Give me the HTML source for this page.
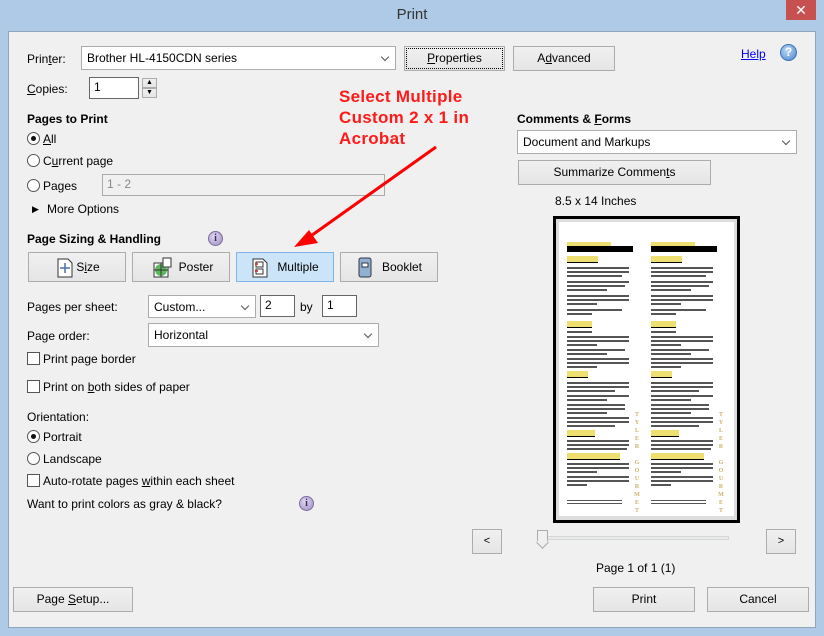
<!DOCTYPE html>
<html><head><meta charset="utf-8"><style>
*{margin:0;padding:0;box-sizing:border-box}
body{width:824px;height:636px;background:#afcae6;font-family:"Liberation Sans",sans-serif;font-size:12px;color:#000;position:relative;overflow:hidden}
.a{position:absolute;white-space:nowrap}
.client{position:absolute;left:8px;top:31px;width:808px;height:597px;background:#f0f0f0;border:1px solid #8fa6bd}
.btn{position:absolute;background:linear-gradient(#f0f0f0,#e5e5e5);border:1px solid #acacac;text-align:center;font-size:12px}
.inp{position:absolute;background:#fff;border:1px solid #abadb3;padding:2px 4px;font-size:12px}
.sel{position:absolute;background:#fff;border:1px solid #acacac;padding:4px 5px;font-size:12px}
.sel:after{content:"";position:absolute;right:7px;top:7px;width:5px;height:5px;border-right:1.5px solid #555;border-bottom:1.5px solid #555;transform:rotate(45deg)}
.lbl{position:absolute;font-size:12px;white-space:nowrap}
.b{font-weight:bold}
.rad{position:absolute;width:13px;height:13px;border:1px solid #555;border-radius:50%;background:#fff}
.rad.on:after{content:"";position:absolute;left:3px;top:3px;width:5px;height:5px;border-radius:50%;background:#111}
.chk{position:absolute;width:13px;height:13px;border:1px solid #555;background:#fff}
.info{position:absolute;width:15px;height:15px;border-radius:50%;background:radial-gradient(circle at 40% 35%,#e0d8f0,#9c8cc0);border:1px solid #7a6aa0;color:#3a2d60;font:bold 10px "Liberation Serif",serif;text-align:center;line-height:13px}
u{text-decoration:underline}
.red{position:absolute;color:#ff1a1a;font-size:17px;font-weight:bold;line-height:21px;white-space:nowrap;letter-spacing:0.3px}
.col{position:absolute;width:68px}
.col div{position:absolute;left:0}
.y{background:#eee070;height:7px}
.g{height:2px;background:#555}
.vt{position:absolute;color:#c9b36a;font:bold 6px "Liberation Serif",serif;line-height:8px;width:6px;text-align:center}
</style></head><body>
<div class="a" style="left:0;top:6px;width:824px;text-align:center;font-size:15px;color:#333">Print</div>
<div class="a" style="left:786px;top:0;width:30px;height:20px;background:#c75050;color:#fff;text-align:center;font-size:14px;line-height:20px">✕</div>
<div class="client"></div>

<div class="lbl" style="left:27px;top:52px">Prin<u>t</u>er:</div>
<div class="sel" style="left:81px;top:46px;width:315px;height:24px">Brother HL-4150CDN series</div>
<div class="btn" style="left:404px;top:46px;width:101px;height:25px;line-height:22px;outline:1px dotted #000;outline-offset:-3px"><u>P</u>roperties</div>
<div class="btn" style="left:513px;top:46px;width:102px;height:25px;line-height:22px">A<u>d</u>vanced</div>
<div class="lbl" style="left:741px;top:47px;color:#0000ee;text-decoration:underline">Help</div>
<div class="a" style="left:780px;top:44px;width:17px;height:17px;border-radius:50%;background:radial-gradient(circle at 40% 35%,#bcd8f5,#4a86cc);border:1px solid #3d73b5;color:#fff;font-weight:bold;font-size:12px;text-align:center;line-height:15px">?</div>

<div class="lbl" style="left:27px;top:82px"><u>C</u>opies:</div>
<div class="inp" style="left:89px;top:77px;width:50px;height:22px;border-color:#666">1</div>
<div class="btn" style="left:142px;top:78px;width:15px;height:10px;font-size:7px;line-height:8px">▲</div>
<div class="btn" style="left:142px;top:88px;width:15px;height:10px;font-size:7px;line-height:8px">▼</div>

<div class="lbl b" style="left:27px;top:112px">Pages to Print</div>
<div class="rad on" style="left:27px;top:132px"></div><div class="lbl" style="left:43px;top:132px"><u>A</u>ll</div>
<div class="rad" style="left:27px;top:154px"></div><div class="lbl" style="left:43px;top:154px">C<u>u</u>rrent page</div>
<div class="rad" style="left:27px;top:179px"></div><div class="lbl" style="left:43px;top:179px">Pages</div>
<div class="inp" style="left:102px;top:174px;width:283px;height:22px;background:#f0f0f0;border-color:#aaa;color:#888">1 - 2</div>
<div class="a" style="left:32px;top:204px;font-size:9px">▶</div><div class="lbl" style="left:47px;top:202px">More Options</div>

<div class="lbl b" style="left:27px;top:232px">Page Sizing &amp; Handling</div>
<div class="info" style="left:208px;top:231px">i</div>

<div class="btn" style="left:28px;top:252px;width:98px;height:30px;line-height:28px;padding-left:22px">S<u>i</u>ze
 <svg class="a" style="left:28px;top:5px" width="16" height="20"><path d="M1 1h10l4 4v14H1z" fill="#fff" stroke="#333"/><path d="M8 5v10M3 10h10" stroke="#4a6fb0" stroke-width="1.5"/></svg></div>
<div class="btn" style="left:132px;top:252px;width:98px;height:30px;line-height:28px;padding-left:30px">Poster
 <svg class="a" style="left:20px;top:4px" width="20" height="21"><rect x="1" y="6" width="14" height="14" fill="#fff" stroke="#333"/><circle cx="8" cy="13" r="6" fill="#5cb85c"/><path d="M8 6v14M1 13h14" stroke="#333"/><rect x="10" y="1" width="8" height="9" fill="#fff" stroke="#333"/></svg></div>
<div class="btn" style="left:236px;top:252px;width:98px;height:30px;line-height:28px;padding-left:26px;background:#cce4f7;border-color:#7eb4ea">Multiple
 <svg class="a" style="left:15px;top:5px" width="16" height="20"><path d="M1 1h10l4 4v14H1z" fill="#fff" stroke="#333"/><rect x="4" y="4" width="7" height="5" fill="none" stroke="#333"/><rect x="4" y="11" width="7" height="5" fill="none" stroke="#333"/><path d="M3 6h3M3 13h3" stroke="#c22" stroke-width="1.5"/></svg></div>
<div class="btn" style="left:340px;top:252px;width:98px;height:30px;line-height:28px;padding-left:26px">Booklet
 <svg class="a" style="left:17px;top:4px" width="14" height="21"><rect x="1" y="1" width="12" height="19" rx="2" fill="#8fb0d0" stroke="#334"/><rect x="4" y="6" width="6" height="4" fill="#fff" stroke="#334"/></svg></div>

<div class="red" style="left:339px;top:86px">Select Multiple<br>Custom 2 x 1 in<br>Acrobat</div>
<svg class="a" style="left:0;top:0" width="824" height="636"><path d="M436 147L308 238" stroke="#f00" stroke-width="3"/><path d="M294 247l24-4-9-13z" fill="#f00"/></svg>

<div class="lbl" style="left:27px;top:300px">Pages per sheet:</div>
<div class="sel" style="left:148px;top:295px;width:108px;height:23px">Custom...</div>
<div class="inp" style="left:260px;top:295px;width:35px;height:22px;border-color:#666">2</div>
<div class="lbl" style="left:300px;top:300px">by</div>
<div class="inp" style="left:322px;top:295px;width:35px;height:22px;border-color:#666">1</div>
<div class="lbl" style="left:27px;top:329px">Page order:</div>
<div class="sel" style="left:148px;top:323px;width:231px;height:24px">Horizontal</div>
<div class="chk" style="left:27px;top:352px"></div><div class="lbl" style="left:43px;top:352px">Print page border</div>
<div class="chk" style="left:27px;top:380px"></div><div class="lbl" style="left:43px;top:380px">Print on <u>b</u>oth sides of paper</div>
<div class="lbl" style="left:27px;top:410px">Orientation:</div>
<div class="rad on" style="left:27px;top:430px"></div><div class="lbl" style="left:43px;top:430px">Portrait</div>
<div class="rad" style="left:27px;top:452px"></div><div class="lbl" style="left:43px;top:452px">Landscape</div>
<div class="chk" style="left:27px;top:474px"></div><div class="lbl" style="left:43px;top:474px">Auto-rotate pages <u>w</u>ithin each sheet</div>
<div class="lbl" style="left:27px;top:497px">Want to print colors as gray &amp; black?</div>
<div class="info" style="left:299px;top:496px">i</div>

<div class="btn" style="left:13px;top:587px;width:120px;height:25px;line-height:23px">Page <u>S</u>etup...</div>

<div class="lbl b" style="left:517px;top:112px">Comments &amp; <u>F</u>orms</div>
<div class="sel" style="left:517px;top:130px;width:280px;height:24px">Document and Markups</div>
<div class="btn" style="left:518px;top:160px;width:193px;height:25px;line-height:23px">Summarize Commen<u>t</u>s</div>
<div class="lbl" style="left:555px;top:194px">8.5 x 14 Inches</div>

<div class="a" style="left:553px;top:216px;width:187px;height:307px;border:3px solid #000;background:#ddd"></div>
<div class="a" style="left:559px;top:222px;width:175px;height:294px;background:#fff"></div>

<div class="col" style="left:567px;top:240px">
 <div class="y" style="top:2px;width:44px;height:4px"></div>
 <div style="top:6px;width:66px;height:6px;background:#000"></div>
 <div class="y" style="top:16px;width:31px;border-bottom:1px solid #000"></div>
 <div class="g" style="top:27px;width:62px"></div><div class="g" style="top:31px;width:62px"></div><div class="g" style="top:35px;width:55px"></div>
 <div class="g" style="top:41px;width:62px"></div><div class="g" style="top:45px;width:58px"></div><div class="g" style="top:49px;width:40px"></div>
 <div class="g" style="top:55px;width:62px"></div><div class="g" style="top:59px;width:62px"></div><div class="g" style="top:63px;width:30px"></div>
 <div class="g" style="top:69px;width:55px"></div><div class="g" style="top:73px;width:25px"></div>
 <div class="y" style="top:81px;width:25px;border-bottom:1px solid #000"></div>
 <div class="g" style="top:91px;width:25px"></div><div class="g" style="top:96px;width:62px"></div><div class="g" style="top:100px;width:62px"></div><div class="g" style="top:104px;width:30px"></div>
 <div class="g" style="top:109px;width:58px"></div><div class="g" style="top:113px;width:40px"></div><div class="g" style="top:118px;width:62px"></div><div class="g" style="top:122px;width:62px"></div><div class="g" style="top:126px;width:30px"></div>
 <div class="y" style="top:131px;width:21px;border-bottom:1px solid #000"></div>
 <div class="g" style="top:142px;width:62px"></div><div class="g" style="top:146px;width:62px"></div><div class="g" style="top:150px;width:48px"></div>
 <div class="g" style="top:155px;width:62px"></div><div class="g" style="top:159px;width:40px"></div>
 <div class="g" style="top:164px;width:58px"></div><div class="g" style="top:168px;width:58px"></div><div class="g" style="top:172px;width:40px"></div>
 <div class="g" style="top:177px;width:62px"></div><div class="g" style="top:181px;width:62px"></div><div class="g" style="top:185px;width:48px"></div>
 <div class="y" style="top:190px;width:28px;border-bottom:1px solid #000"></div>
 <div class="g" style="top:200px;width:62px"></div><div class="g" style="top:204px;width:62px"></div><div class="g" style="top:208px;width:60px"></div>
 <div class="y" style="top:213px;width:53px;border-bottom:1px solid #000"></div>
 <div class="g" style="top:223px;width:62px"></div><div class="g" style="top:227px;width:62px"></div><div class="g" style="top:231px;width:30px"></div>
 <div class="g" style="top:236px;width:62px"></div><div class="g" style="top:240px;width:62px"></div><div class="g" style="top:244px;width:20px"></div>
 <div class="g" style="top:260px;width:55px;height:1px"></div><div class="g" style="top:263px;width:55px;height:1px"></div>
</div>
<div class="vt" style="left:634px;top:411px">T<br>Y<br>L<br>E<br>R<br><br>G<br>O<br>U<br>R<br>M<br>E<br>T</div>
<div class="col" style="left:651px;top:240px">
 <div class="y" style="top:2px;width:44px;height:4px"></div>
 <div style="top:6px;width:66px;height:6px;background:#000"></div>
 <div class="y" style="top:16px;width:31px;border-bottom:1px solid #000"></div>
 <div class="g" style="top:27px;width:62px"></div><div class="g" style="top:31px;width:62px"></div><div class="g" style="top:35px;width:55px"></div>
 <div class="g" style="top:41px;width:62px"></div><div class="g" style="top:45px;width:58px"></div><div class="g" style="top:49px;width:40px"></div>
 <div class="g" style="top:55px;width:62px"></div><div class="g" style="top:59px;width:62px"></div><div class="g" style="top:63px;width:30px"></div>
 <div class="g" style="top:69px;width:55px"></div><div class="g" style="top:73px;width:25px"></div>
 <div class="y" style="top:81px;width:25px;border-bottom:1px solid #000"></div>
 <div class="g" style="top:91px;width:25px"></div><div class="g" style="top:96px;width:62px"></div><div class="g" style="top:100px;width:62px"></div><div class="g" style="top:104px;width:30px"></div>
 <div class="g" style="top:109px;width:58px"></div><div class="g" style="top:113px;width:40px"></div><div class="g" style="top:118px;width:62px"></div><div class="g" style="top:122px;width:62px"></div><div class="g" style="top:126px;width:30px"></div>
 <div class="y" style="top:131px;width:21px;border-bottom:1px solid #000"></div>
 <div class="g" style="top:142px;width:62px"></div><div class="g" style="top:146px;width:62px"></div><div class="g" style="top:150px;width:48px"></div>
 <div class="g" style="top:155px;width:62px"></div><div class="g" style="top:159px;width:40px"></div>
 <div class="g" style="top:164px;width:58px"></div><div class="g" style="top:168px;width:58px"></div><div class="g" style="top:172px;width:40px"></div>
 <div class="g" style="top:177px;width:62px"></div><div class="g" style="top:181px;width:62px"></div><div class="g" style="top:185px;width:48px"></div>
 <div class="y" style="top:190px;width:28px;border-bottom:1px solid #000"></div>
 <div class="g" style="top:200px;width:62px"></div><div class="g" style="top:204px;width:62px"></div><div class="g" style="top:208px;width:60px"></div>
 <div class="y" style="top:213px;width:53px;border-bottom:1px solid #000"></div>
 <div class="g" style="top:223px;width:62px"></div><div class="g" style="top:227px;width:62px"></div><div class="g" style="top:231px;width:30px"></div>
 <div class="g" style="top:236px;width:62px"></div><div class="g" style="top:240px;width:62px"></div><div class="g" style="top:244px;width:20px"></div>
 <div class="g" style="top:260px;width:55px;height:1px"></div><div class="g" style="top:263px;width:55px;height:1px"></div>
</div>
<div class="vt" style="left:718px;top:411px">T<br>Y<br>L<br>E<br>R<br><br>G<br>O<br>U<br>R<br>M<br>E<br>T</div>

<div class="btn" style="left:472px;top:529px;width:30px;height:25px;line-height:22px;font-size:11px">&lt;</div>
<div class="a" style="left:537px;top:536px;width:192px;height:4px;background:#e7eaea;border:1px solid #d6d6d6"></div>
<div class="a" style="left:537px;top:530px;width:11px;height:13px;background:#f0f0f0;border:1px solid #aaa;border-bottom:none"></div>
<div class="a" style="left:538px;top:538px;width:9px;height:9px;border-right:1px solid #aaa;border-bottom:1px solid #aaa;transform:rotate(45deg);background:#f0f0f0"></div>
<div class="btn" style="left:766px;top:529px;width:30px;height:25px;line-height:22px;font-size:11px">&gt;</div>
<div class="lbl" style="left:596px;top:561px">Page 1 of 1 (1)</div>
<div class="btn" style="left:593px;top:587px;width:102px;height:25px;line-height:23px">Print</div>
<div class="btn" style="left:707px;top:587px;width:102px;height:25px;line-height:23px">Cancel</div>
</body></html>
